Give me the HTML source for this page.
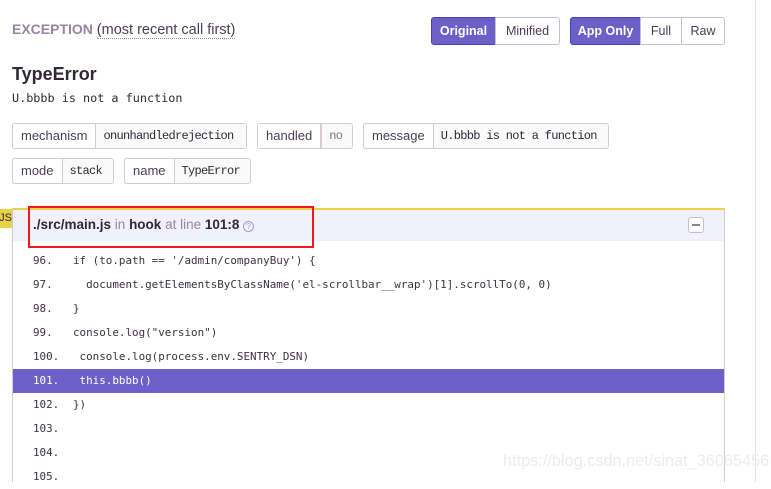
<!DOCTYPE html>
<html><head><meta charset="utf-8"><style>
*{box-sizing:border-box;margin:0;padding:0}
body{width:771px;height:482px;overflow:hidden;background:#fff;font-family:"Liberation Sans",sans-serif;color:#2f2936;position:relative}
.abs{position:absolute}
.vline{left:755px;top:0;width:1px;height:482px;background:#e2dee6}
.exc{left:12px;top:21px;font-size:14px;color:#9585a3;font-weight:bold}
.exc span{font-weight:normal;color:#493e54;border-bottom:1px dotted #9585a3;font-size:14.5px}
.btn{top:17px;height:28px;border:1px solid #c7bfd0;font-size:12.5px;line-height:26px;text-align:center;color:#493e54;background:#fff}
.act{background:#6c5fc7;color:#fff;font-weight:bold;border-color:#4e3fb4}
h1{left:12px;top:64px;font-size:18px;font-weight:bold;position:absolute;color:#2f2936}
.msg{left:12px;top:91px;font-family:"DejaVu Sans Mono",monospace;font-size:11.8px;color:#2f2936}
.tag{height:26px;border:1px solid #d1cad8;border-radius:3px;display:flex;font-size:13px;line-height:24px;overflow:hidden}
.tag .k{padding:0 8px;color:#4a3e56;border-right:1px solid #d1cad8;white-space:nowrap}
.tag .v{flex:1;padding:0 7px;font-family:"Liberation Mono",monospace;font-size:12px;letter-spacing:-0.7px;line-height:24px;background:#fafafb;white-space:nowrap;color:#2f2936}
.frame{left:12px;top:208px;width:713px;height:274px;border:1px solid #d1cad8;border-top:2px solid #e8d34a;border-bottom:none}
.hdr{left:13px;top:210px;width:711px;height:31px;background:#f0f1fa}
.code{font-family:"DejaVu Sans Mono",monospace;font-size:10.9px;color:#3b3340}
.row{left:13px;width:711px;height:24px;line-height:24px;white-space:pre}
.row .n{display:inline-block;width:60px;padding-left:20px}
</style></head><body>
<div class="abs vline"></div>
<div class="abs exc">EXCEPTION <span>(most recent call first)</span></div>
<div class="abs btn act" style="left:431px;width:65px;border-radius:3px 0 0 3px">Original</div>
<div class="abs btn" style="left:495px;width:65px;border-radius:0 3px 3px 0">Minified</div>
<div class="abs btn act" style="left:570px;width:71px;border-radius:3px 0 0 3px">App Only</div>
<div class="abs btn" style="left:640px;width:42px">Full</div>
<div class="abs btn" style="left:681px;width:44px;border-radius:0 3px 3px 0">Raw</div>
<h1>TypeError</h1>
<div class="abs msg">U.bbbb is not a function</div>
<div class="abs tag" style="left:12px;top:123px;width:235px"><span class="k">mechanism</span><span class="v">onunhandledrejection</span></div>
<div class="abs tag" style="left:257px;top:123px;width:96px"><span class="k">handled</span><span class="v" style="border-left:1px solid #f0c8c8;color:#777">no</span></div>
<div class="abs tag" style="left:363px;top:123px;width:246px"><span class="k">message</span><span class="v">U.bbbb is not a function</span></div>
<div class="abs tag" style="left:12px;top:158px;width:102px"><span class="k">mode</span><span class="v">stack</span></div>
<div class="abs tag" style="left:124px;top:158px;width:127px"><span class="k">name</span><span class="v">TypeError</span></div>
<div class="abs frame"></div>
<div class="abs" style="left:0;top:209px;width:12px;height:19px;background:#e8d34a;font-size:11px;line-height:19px;overflow:hidden;direction:rtl">JS</div>
<div class="abs hdr"></div>
<div class="abs" style="left:33px;top:217px;font-size:13.5px;color:#9585a3"><b style="color:#2f2936">./src/main.js</b> in <b style="color:#2f2936">hook</b> at line <b style="color:#2f2936">101:8</b> <span style="display:inline-block;width:11px;height:11px;border:1px solid #9aa0c8;border-radius:50%;font-size:8px;line-height:9px;text-align:center;color:#9aa0c8;vertical-align:0">?</span></div>
<div class="abs" style="left:688px;top:217px;width:16px;height:16px;border:1px solid #c7bfd0;border-radius:3px;background:#fff"><div style="margin:6px 3px;height:2px;background:#888"></div></div>
<div class="abs" style="left:28px;top:206px;width:286px;height:42px;border:2px solid #f21818"></div>
<div class="abs code">
<div class="abs row" style="top:249px"><span class="n">96.</span>if (to.path == '/admin/companyBuy') {</div>
<div class="abs row" style="top:273px"><span class="n">97.</span>  document.getElementsByClassName('el-scrollbar__wrap')[1].scrollTo(0, 0)</div>
<div class="abs row" style="top:297px"><span class="n">98.</span>}</div>
<div class="abs row" style="top:321px"><span class="n">99.</span>console.log("version")</div>
<div class="abs row" style="top:345px"><span class="n">100.</span> console.log(process.env.SENTRY_DSN)</div>
<div class="abs row" style="top:369px;background:#6c5fc7;color:#fff"><span class="n">101.</span> this.bbbb()</div>
<div class="abs row" style="top:393px"><span class="n">102.</span>})</div>
<div class="abs row" style="top:417px"><span class="n">103.</span></div>
<div class="abs row" style="top:441px"><span class="n">104.</span></div>
<div class="abs row" style="top:465px"><span class="n">105.</span></div>
</div>
<div class="abs" style="left:503px;top:452px;font-size:16.3px;color:#ececec">https://blog.csdn.net/sinat_36065456</div>
</body></html>
